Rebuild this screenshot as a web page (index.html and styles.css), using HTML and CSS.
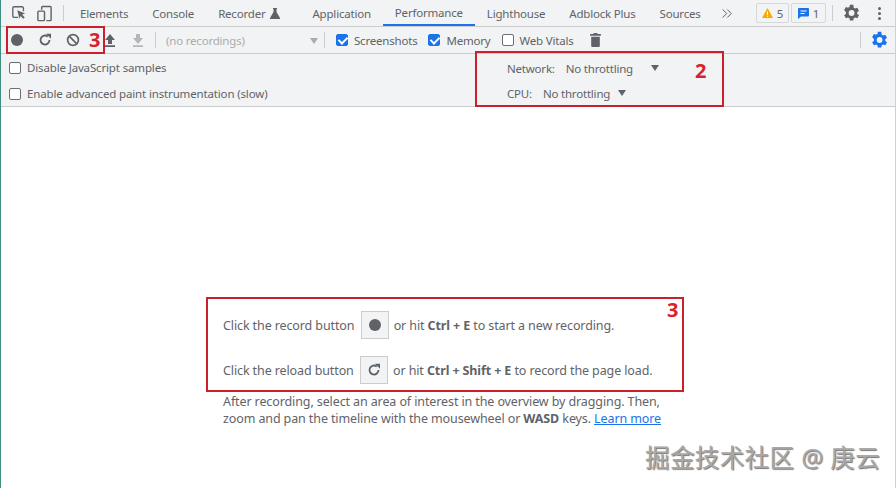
FILE: index.html
```html
<!DOCTYPE html>
<html lang="en">
<head>
    <meta charset="UTF-8">
    <title>Performance</title>
    <link rel="stylesheet" href="styles.css">
</head>
<body>
<div class="page">
    <div class="tabbar">
        <div class="tools">
            <svg class="ico" width="16" height="16" viewBox="0 0 18 18"><path d="M8 14H3.500A1.500 1.500 0 0 1 2 12.500V3.500A1.500 1.500 0 0 1 3.500 2h9A1.500 1.500 0 0 1 14 3.500V7" fill="none" stroke="#5f6368" stroke-width="1.500"/><path d="M7 6l9 3.500-3.500 1.200 3 3.300-1.700 1.600-3-3.300L9.500 15.500z" fill="#5f6368"/></svg>
            <svg class="ico" width="17" height="17" viewBox="0 0 18 18"><path d="M6 5V2.500A1 1 0 0 1 7 1.500h8a1 1 0 0 1 1 1v13a1 1 0 0 1-1 1h-4" fill="none" stroke="#5f6368" stroke-width="1.500"/><rect x="2" y="6.500" width="7" height="10" rx="1" fill="none" stroke="#5f6368" stroke-width="1.500"/></svg>
        </div>
        <span class="sep sep-tabs"></span>
        <div class="tabs">
            <span class="tab">Elements</span>
            <span class="tab">Console</span>
            <span class="tab tab-recorder">Recorder
                <svg width="10" height="11" viewBox="0 0 10 11"><path d="M3 0h4v1H6.500v3L10 10a.7.700 0 0 1-.6 1H.6A.7.700 0 0 1 0 10l3.500-6V1H3z" fill="#5f6368"/></svg>
            </span>
            <span class="tab">Application</span>
            <span class="tab active">Performance</span>
            <span class="tab">Lighthouse</span>
            <span class="tab">Adblock Plus</span>
            <span class="tab">Sources</span>
            <svg class="more" width="10" height="9" viewBox="0 0 10 9"><path d="M.7.500l4 4-4 4M5.300.500l4 4-4 4" fill="none" stroke="#5f6368"/></svg>
        </div>
        <div class="status">
            <span class="badge">
                <svg width="11" height="10" viewBox="0 0 11 10"><path d="M5.500 0L11 10H0z" fill="#f9ab00"/><path d="M5 3.500h1v3.500H5zM5 7.800h1v1H5z" fill="#fff"/></svg>
                5
            </span>
            <span class="badge badge-wide">
                <svg width="11" height="11" viewBox="0 0 11 11"><path d="M1 0h9a1 1 0 0 1 1 1v6.500a1 1 0 0 1-1 1H3L0 11V1a1 1 0 0 1 1-1z" fill="#1a73e8"/><path d="M2.500 2.500h6v1h-6zM2.500 5h4v1h-4z" fill="#fff"/></svg>
                1
            </span>
            <span class="sep"></span>
            <svg class="gear" width="20" height="20" viewBox="0 0 24 24"><path fill="#5f6368" d="M19.400 13a7.500 7.500 0 0 0 0-2l2.200-1.700-2.100-3.600-2.600 1a7.500 7.500 0 0 0-1.700-1L14.800 2h-4.200l-.4 2.700a7.500 7.500 0 0 0-1.700 1l-2.600-1-2.100 3.600L6 11a7.500 7.500 0 0 0 0 2l-2.200 1.700 2.100 3.600 2.600-1a7.500 7.500 0 0 0 1.700 1l.4 2.700h4.200l.4-2.700a7.500 7.500 0 0 0 1.700-1l2.600 1 2.100-3.600zM12.700 15.500a3.500 3.500 0 1 1 0-7 3.500 3.500 0 0 1 0 7z"/></svg>
            <span class="dots"><i></i><i></i><i></i></span>
        </div>
    </div>

    <div class="toolbar">
        <span class="btn"><span class="dot"></span></span>
        <span class="btn">
            <svg width="14" height="14" viewBox="0 0 14 14"><path d="M11.500 7A4.500 4.500 0 1 1 9.800 3.500" fill="none" stroke="#5f6368" stroke-width="1.800"/><path d="M8 0.800h5v5z" fill="#5f6368"/></svg>
        </span>
        <span class="btn">
            <svg width="14" height="14" viewBox="0 0 14 14"><circle cx="7" cy="7" r="5.400" fill="none" stroke="#5f6368" stroke-width="1.700"/><path d="M3.200 3.200l7.600 7.600" stroke="#5f6368" stroke-width="1.700"/></svg>
        </span>
        <span class="btn btn-gap">
            <svg width="12" height="13" viewBox="0 0 12 13"><path d="M6 0l5 6H8v4H4V6H1zM1 11.300h10V13H1z" fill="#5f6368"/></svg>
        </span>
        <span class="btn">
            <svg width="12" height="13" viewBox="0 0 12 13"><path d="M6 10L1 4h3V0h4v4h3zM1 11.300h10V13H1z" fill="#b4b7ba"/></svg>
        </span>
        <span class="sep sep-rec"></span>
        <div class="recordings">
            <span>(no recordings)</span>
            <span class="arrow arrow-dim"></span>
        </div>
        <span class="sep"></span>
        <label class="check"><span class="box on"></span>Screenshots</label>
        <label class="check"><span class="box on"></span>Memory</label>
        <label class="check"><span class="box"></span>Web Vitals</label>
        <svg class="trash" width="11" height="14" viewBox="0 0 10 13"><path d="M3.500 0h3l.5 1h3v1.500H0V1h3zM1 3.500h8V12a1 1 0 0 1-1 1H2a1 1 0 0 1-1-1z" fill="#5f6368"/></svg>
        <span class="spacer"></span>
        <span class="sep"></span>
        <svg class="gear-blue" width="20" height="20" viewBox="0 0 24 24"><path fill="#1a73e8" d="M19.400 13a7.500 7.500 0 0 0 0-2l2.200-1.700-2.100-3.600-2.600 1a7.500 7.500 0 0 0-1.700-1L14.800 2h-4.200l-.4 2.700a7.500 7.500 0 0 0-1.700 1l-2.600-1-2.100 3.600L6 11a7.500 7.500 0 0 0 0 2l-2.200 1.700 2.100 3.600 2.600-1a7.500 7.500 0 0 0 1.700 1l.4 2.700h4.200l.4-2.700a7.500 7.500 0 0 0 1.700-1l2.600 1 2.100-3.600zM12.700 15.500a3.500 3.500 0 1 1 0-7 3.500 3.500 0 0 1 0 7z"/></svg>
    </div>

    <div class="settings">
        <div class="samples">
            <label class="check"><span class="box"></span>Disable JavaScript samples</label>
            <label class="check"><span class="box"></span>Enable advanced paint instrumentation (slow)</label>
        </div>
        <div class="throttle">
            <div class="throttle-row"><span class="throttle-label">Network:</span><span>No throttling</span><span class="arrow"></span></div>
            <div class="throttle-row"><span class="throttle-label">CPU:</span><span>No throttling</span><span class="arrow"></span></div>
        </div>
    </div>

    <div class="main">
        <div class="landing">
            <div class="hint">Click the record button <span class="key"><span class="dot"></span></span> or hit <b>Ctrl + E</b> to start a new recording.</div>
            <div class="hint">Click the reload button <span class="key"><svg width="14" height="14" viewBox="0 0 14 14"><path d="M11.500 7A4.500 4.500 0 1 1 9.800 3.500" fill="none" stroke="#5f6368" stroke-width="1.800"/><path d="M8 0.800h5v5z" fill="#5f6368"/></svg></span> or hit <b>Ctrl + Shift + E</b> to record the page load.</div>
            <div class="after">
                <div>After recording, select an area of interest in the overview by dragging. Then,</div>
                <div>zoom and pan the timeline with the mousewheel or <b>WASD</b> keys. <a href="#">Learn more</a></div>
            </div>
        </div>
    </div>

    <!-- red annotations drawn on top of the screenshot -->
    <div class="mark mark-record"><span class="num">3</span></div>
    <div class="mark mark-throttle"><span class="num">2</span></div>
    <div class="mark mark-landing"><span class="num">3</span></div>
    <div class="watermark">掘金技术社区 @ 庚云</div>
</div>
</body>
</html>
```

FILE: styles.css
```css
*{
    margin: 0;
    padding: 0;
    box-sizing: border-box;
}
body{
    font-family: "Noto Sans", "Noto Sans CJK SC", sans-serif;
    font-size: 11.500px;
    letter-spacing: -0.2px;
    color: #5f6368;
    background: #fff;
}
.page{
    position: relative;
    width: 896px;
    height: 488px;
    overflow: hidden;
    display: flex;
    flex-direction: column;
    border-left: 1px solid #3f8f80;
    border-right: 1px solid #d0d0d0;
}
.tabbar{
    display: flex;
    align-items: center;
    height: 27px;
    background: #f1f3f4;
    border-bottom: 1px solid #ccc;
    flex: none;
}
.tools{
    display: flex;
    gap: 9px;
    padding-left: 10px;
    align-items: center;
}
.sep{
    display: block;
    width: 1px;
    height: 16px;
    background: #ccc;
    flex: none;
}
.sep-tabs{
    margin-left: 10px;
}
.tabs{
    display: flex;
    align-items: center;
    height: 26px;
    margin-left: 4px;
}
.tab{
    display: flex;
    align-items: center;
    gap: 5px;
    padding: 1px 12px 0;
    height: 26px;
    white-space: nowrap;
}
.tab-recorder{
    padding-right: 20px;
}
.active{
    border-bottom: 2px solid #1a73e8;
}
.more{
    margin-left: 9px;
}
.status{
    display: flex;
    align-items: center;
    margin-left: auto;
    padding-right: 14px;
}
.badge{
    display: flex;
    align-items: center;
    justify-content: center;
    gap: 4px;
    width: 33px;
    height: 20px;
    margin-right: 2px;
    border: 1px solid #d5d7d9;
    border-radius: 2px;
}
.badge-wide{
    width: 35px;
    margin-right: 6px;
}
.gear{
    margin-left: 8px;
}
.dots{
    display: flex;
    flex-direction: column;
    gap: 2px;
    margin-left: 17px;
}
.dots i{
    display: block;
    width: 3px;
    height: 3px;
    border-radius: 50%;
    background: #5f6368;
}
.toolbar{
    display: flex;
    align-items: center;
    height: 27px;
    background: #f1f3f4;
    border-bottom: 1px solid #ccc;
    flex: none;
    padding-left: 2px;
}
.btn{
    display: flex;
    align-items: center;
    justify-content: center;
    width: 28px;
    height: 26px;
    flex: none;
}
.btn-gap{
    margin-left: 9px;
}
.dot{
    display: block;
    width: 12px;
    height: 12px;
    border-radius: 50%;
    background: #5f6368;
}
.sep-rec{
    margin-left: 3px;
}
.recordings{
    display: flex;
    align-items: center;
    justify-content: space-between;
    width: 168px;
    padding: 1px 6px 0 10px;
    color: #a9acaf;
}
.arrow{
    display: block;
    width: 0;
    height: 0;
    border-left: 4px solid transparent;
    border-right: 4px solid transparent;
    border-top: 6px solid #5f6368;
}
.arrow-dim{
    border-top-color: #a9acaf;
}
.check{
    display: flex;
    align-items: center;
    gap: 6px;
    white-space: nowrap;
}
.toolbar .check{
    margin-left: 11px;
    padding-top: 1px;
}
.toolbar .box{
    margin-top: -1px;
}
.box{
    position: relative;
    display: block;
    width: 12px;
    height: 12px;
    border: 1px solid #6b6f73;
    border-radius: 2px;
    background: #fff;
    flex: none;
}
.box.on{
    background: #1a73e8;
    border-color: #1a73e8;
}
.box.on::after{
    content: "";
    position: absolute;
    left: 3px;
    top: 0;
    width: 4px;
    height: 7px;
    border: solid #fff;
    border-width: 0 2px 2px 0;
    transform: rotate(45deg);
}
.trash{
    margin-left: 17px;
}
.spacer{
    flex: 1;
}
.gear-blue{
    margin-left: 8px;
    margin-right: 6px;
}
.settings{
    display: flex;
    height: 53px;
    background: #f1f3f4;
    border-bottom: 1px solid #ccc;
    flex: none;
    letter-spacing: -0.15px;
}
.samples{
    display: flex;
    flex-direction: column;
    justify-content: space-between;
    width: 506px;
    padding: 6px 0 5px 8px;
}
.throttle{
    display: flex;
    flex-direction: column;
    justify-content: space-between;
    padding: 6px 0 5px 0;
    letter-spacing: -0.2px;
}
.throttle-row{
    display: flex;
    align-items: center;
    height: 16px;
}
.throttle-label{
    margin-right: 11px;
}
.throttle-row .arrow{
    margin-left: 18px;
}
.throttle-row:last-child .arrow{
    margin-left: 8px;
}
.main{
    flex: 1;
    padding: 204px 0 0 222px;
    font-size: 12.500px;
    letter-spacing: -0.11px;
}
.hint{
    height: 28px;
    line-height: 30px;
    margin-bottom: 17px;
    white-space: nowrap;
}
.key{
    display: inline-flex;
    align-items: center;
    justify-content: center;
    vertical-align: top;
    width: 28px;
    height: 28px;
    margin: 0 2px 0 3px;
    background: #f1f3f4;
    border: 1px solid #ccc;
}
.after{
    line-height: 17px;
    margin-top: -8px;
    white-space: nowrap;
}
.after a{
    color: #1a73e8;
}
.mark{
    position: absolute;
    border: 2px solid #cb1f2c;
}
.num{
    position: absolute;
    color: #d8222c;
    font-weight: 700;
    font-size: 20px;
    letter-spacing: 0;
    line-height: 20px;
}
.mark-record{
    left: 5px;
    top: 26px;
    width: 99px;
    height: 28px;
}
.mark-record .num{
    left: 81px;
    top: 2px;
}
.mark-throttle{
    left: 474px;
    top: 51px;
    width: 249px;
    height: 56px;
}
.mark-throttle .num{
    left: 218px;
    top: 8px;
}
.mark-landing{
    left: 205px;
    top: 297px;
    width: 478px;
    height: 95px;
}
.mark-landing .num{
    left: 459px;
    top: 1px;
}
.watermark{
    position: absolute;
    left: 644px;
    top: 441px;
    font-size: 24.500px;
    letter-spacing: 0.4px;
    line-height: 34px;
    color: #a8a8a8;
    text-shadow: 1px 1px 1px #777;
    white-space: nowrap;
}
```
